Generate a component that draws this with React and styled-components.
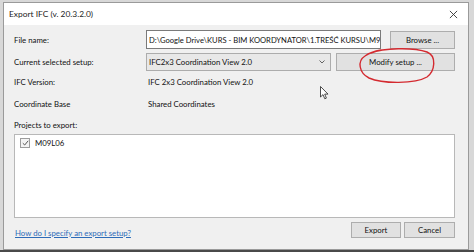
import React from "react";
import styled, { createGlobalStyle } from "styled-components";

const FONT = `Lato, "Open Sans", "Liberation Sans", sans-serif`;

const GlobalStyle = createGlobalStyle`
  html, body {
    margin: 0;
    padding: 0;
    background: #d4d4d4;
  }
  body {
    width: 474px;
    height: 252px;
    overflow: hidden;
    font-family: ${FONT};
  }
`;

const Screen = styled.div`
  width: 474px;
  height: 252px;
  padding: 2px 0 0 3px;
  box-sizing: border-box;
  display: flex;
  flex-direction: column;
  background: linear-gradient(to bottom, #d8d8d8 0, #d8d8d8 250px, #4a4a4a 250px);
`;

const Dialog = styled.div`
  position: relative;
  width: 466px;
  height: 248px;
  box-sizing: border-box;
  border: 1px solid #9a9a9a;
  background: #f0f0f0;
  display: flex;
  flex-direction: column;
  color: #111;
  font-size: 7.8px;
`;

const TitleBar = styled.div`
  height: 22px;
  background: #ffffff;
  display: flex;
  align-items: center;
  justify-content: space-between;
  padding: 0 10px 0 5px;
  font-size: 8.4px;
  color: #222;
`;

const Close = styled.svg`
  width: 9px;
  height: 9px;
`;

const Body = styled.div`
  flex: 1;
  display: flex;
  flex-direction: column;
  padding: 5px 13px 6px 6px;
`;

const Row = styled.div`
  display: flex;
  align-items: center;
  height: ${(p) => p.$h || 20}px;
  margin-bottom: ${(p) => p.$mb || 0}px;
`;

const Label = styled.div`
  width: 132px;
  padding-left: 4px;
  flex-shrink: 0;
`;

const Value = styled.div`
  padding-left: 2px;
`;

const PathInput = styled.div`
  width: 235px;
  height: 19px;
  box-sizing: border-box;
  border: 1px solid #7a7a7a;
  background: #fff;
  padding: 0 2px;
  display: flex;
  align-items: center;
  white-space: nowrap;
  overflow: hidden;
  font-size: 7.6px;
`;

const Combo = styled.div`
  width: 185px;
  height: 18px;
  box-sizing: border-box;
  border: 1px solid #acacac;
  background: #e8e8e8;
  padding: 0 5px 0 2px;
  display: flex;
  align-items: center;
  justify-content: space-between;
`;

const Chevron = styled.svg`
  width: 6px;
  height: 4px;
`;

const Button = styled.div`
  width: ${(p) => p.$w}px;
  height: ${(p) => p.$h || 18}px;
  margin-left: ${(p) => p.$ml || 0}px;
  box-sizing: border-box;
  border: 1px solid #adadad;
  background: #e1e1e1;
  display: flex;
  align-items: center;
  justify-content: center;
`;

const ListBox = styled.div`
  height: 84px;
  margin-left: 4px;
  box-sizing: border-box;
  border: 1px solid #b8b8b8;
  background: #fff;
  padding: 3px 5px;
`;

const Item = styled.div`
  display: flex;
  align-items: center;
  gap: 5px;
`;

const Check = styled.div`
  width: 8px;
  height: 8px;
  border: 1px solid #9c9c9c;
  background: #f4f4f4;
  display: flex;
  align-items: center;
  justify-content: center;
`;

const Footer = styled.div`
  flex: 1;
  display: flex;
  align-items: center;
  justify-content: space-between;
  padding: 4px 0 0 5px;
`;

const HelpLink = styled.span`
  color: #2d6bb8;
  text-decoration: underline;
`;

const Buttons = styled.div`
  display: flex;
  margin-top: -6px;
`;

const Annotation = styled.svg`
  position: absolute;
  left: 349px;
  top: 44px;
  width: 84px;
  height: 38px;
  pointer-events: none;
`;

const Cursor = styled.svg`
  position: absolute;
  left: 316px;
  top: 83px;
  width: 9px;
  height: 14px;
`;

export default function App() {
  return (
    <>
      <GlobalStyle />
      <Screen>
        <Dialog>
          <TitleBar>
            <span>Export IFC (v. 20.3.2.0)</span>
            <Close viewBox="0 0 10 10">
              <path d="M1 1L9 9M9 1L1 9" stroke="#333" strokeWidth="1" />
            </Close>
          </TitleBar>
          <Body>
            <Row $h={19} $mb={4}>
              <Label>File name:</Label>
              <PathInput>D:\Google Drive\KURS - BIM KOORDYNATOR\1.TREŚĆ KURSU\M9\M</PathInput>
              <Button $w={65} $ml={9}>Browse ...</Button>
            </Row>
            <Row $h={18}>
              <Label>Current selected setup:</Label>
              <Combo>
                <span>IFC2x3 Coordination View 2.0</span>
                <Chevron viewBox="0 0 6 4">
                  <path d="M0.5 0.5L3 3L5.5 0.5" fill="none" stroke="#555" strokeWidth="0.9" />
                </Chevron>
              </Combo>
              <Button $w={119} $ml={5}>Modify setup ...</Button>
            </Row>
            <Row $h={22}>
              <Label>IFC Version:</Label>
              <Value>IFC 2x3 Coordination View 2.0</Value>
            </Row>
            <Row $h={22}>
              <Label>Coordinate Base</Label>
              <Value>Shared Coordinates</Value>
            </Row>
            <Row $h={19}>
              <Label>Projects to export:</Label>
            </Row>
            <ListBox>
              <Item>
                <Check>
                  <svg width="7" height="6" viewBox="0 0 7 6">
                    <path d="M0.8 3.2L2.7 5L6.2 0.8" fill="none" stroke="#555" strokeWidth="1" />
                  </svg>
                </Check>
                <span>M09L06</span>
              </Item>
            </ListBox>
            <Footer>
              <HelpLink>How do I specify an export setup?</HelpLink>
              <Buttons>
                <Button $w={50} $h={16}>Export</Button>
                <Button $w={51} $h={16} $ml={3}>Cancel</Button>
              </Buttons>
            </Footer>
          </Body>
          <Annotation viewBox="0 0 84 38">
            <path
              d="M18 6 C30 1, 60 0, 74 5 C84 9, 82 24, 74 30 C62 37, 30 37, 16 31 C6 26, 4 14, 12 9 C16 6, 22 4, 28 3"
              fill="none"
              stroke="#d42a30"
              strokeWidth="1.4"
              strokeLinecap="round"
            />
          </Annotation>
          <Cursor viewBox="0 0 9 14">
            <path d="M0.5 0.5L0.5 11L3 8.6L4.8 12.8L6.4 12.1L4.7 8.1L8 8.1Z" fill="#fff" stroke="#222" strokeWidth="0.8" strokeLinejoin="round" />
          </Cursor>
        </Dialog>
      </Screen>
    </>
  );
}
